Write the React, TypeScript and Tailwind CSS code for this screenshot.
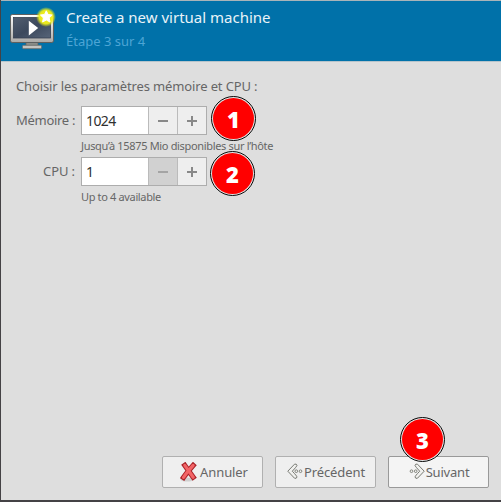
import type { ReactNode } from "react";

const star = "M46.3 10.8l1.8 3.7 4.1.5-3 2.9.8 4.1-3.7-2-3.7 2 .8-4.1-3-2.9 4.1-.5z";

function MachineIcon() {
  return (
    <svg width="50" height="46" viewBox="6 6 50 46" className="block shrink-0">
      <defs>
        <linearGradient id="frame" x1="0" y1="0" x2="0" y2="1">
          <stop offset="0" stopColor="#fff" />
          <stop offset="1" stopColor="#aaa9a6" />
        </linearGradient>
        <linearGradient id="screen" x1="0" y1="0" x2="1" y2="1">
          <stop offset="0" stopColor="#525e70" />
          <stop offset="0.5" stopColor="#3c495d" />
          <stop offset="1" stopColor="#566478" />
        </linearGradient>
        <radialGradient id="glow">
          <stop offset="0" stopColor="#fbf51c" />
          <stop offset="0.68" stopColor="#f0ee18" stopOpacity="0.95" />
          <stop offset="1" stopColor="#d8e820" stopOpacity="0" />
        </radialGradient>
      </defs>
      <path d="M26 41h12v5H26z" fill="#8b8d88" stroke="#5b5d5b" strokeWidth=".7" />
      <rect x="22.5" y="45.3" width="19" height="3.4" rx="1" fill="#c4c4c0" stroke="#686a66" strokeWidth=".8" />
      <rect x="10.5" y="14.5" width="43" height="28" rx="1.7" fill="url(#frame)" stroke="#5d5f5e" />
      <rect x="13.5" y="17.5" width="37" height="20.5" fill="url(#screen)" stroke="#354050" strokeWidth=".8" />
      <path d="M28.8 20.7v14.8l9.4-7.4z" fill="#fff" />
      <circle cx="46" cy="17" r="10" fill="url(#glow)" />
      <path d={star} fill="#fff" stroke="#fff" strokeWidth="1" strokeLinejoin="round" />
    </svg>
  );
}

function CancelIcon() {
  return (
    <svg width="18" height="20" viewBox="0 0 18 20" className="block">
      <ellipse cx="7" cy="17.5" rx="6.5" ry="2" fill="#bbb" opacity=".6" />
      <path d="M4.8 3.4 13.2 15.2M13.1 3.4C9.8 7 6.5 10.8 3.5 15.4" fill="none" stroke="#a92228" strokeWidth="5.2" strokeLinecap="square" strokeLinejoin="round" />
      <path d="M4.8 3.4 13.2 15.2M13.1 3.4C9.8 7 6.5 10.8 3.5 15.4" fill="none" stroke="#f26466" strokeWidth="3.2" strokeLinecap="round" />
    </svg>
  );
}

function ArrowIcon({ forward = false }: { forward?: boolean }) {
  return (
    <svg width="16" height="17" viewBox="0 0 16 17" className={forward ? "block -scale-x-100" : "block"}>
      <path d="M.8 8.2 7.5 1.2Q9.5.5 10 2.3Q9.9 3.3 5.3 8.2Q9.9 13 10 14Q9.5 16 7.5 15.2Z" fill="#f1f1ef" stroke="#777972" strokeWidth="1" />
      <circle cx="9.3" cy="8.2" r="1.35" fill="#f1f1ef" stroke="#777972" strokeWidth=".9" />
      <circle cx="13.5" cy="8.2" r="1.35" fill="#f1f1ef" stroke="#777972" strokeWidth=".9" />
    </svg>
  );
}

function Badge({ n, place }: { n: number; place: string }) {
  return (
    <span className={`absolute z-10 flex size-[45px] items-center justify-center rounded-full border border-[#080808] bg-[#e4e4e4] p-px ${place}`}>
      <span className="flex size-full items-center justify-center rounded-full bg-[#ff0000] font-['Open_Sans','Noto_Sans',sans-serif] text-[22px] leading-none font-extrabold tracking-normal text-white">{n}</span>
    </span>
  );
}

function SpinBox({ value, disabled = false, badge }: { value: string; disabled?: boolean; badge: ReactNode }) {
  return (
    <div className="relative flex h-[29px] w-[126px] border border-[#adadad] bg-white">
      <span className="flex w-[66px] items-center pl-[4px] text-[14px] tracking-[-0.6px] text-[#303030]">{value}</span>
      <button className={`flex w-[29px] items-center justify-center border-l border-[#bbb] ${disabled ? "bg-[#d1d1d1] text-[#a4a4a4]" : "bg-[#eee] text-[#888]"}`}>
        <svg width="10" height="10" viewBox="0 0 10 10"><path d="M0 4h10v2H0z" fill="currentColor" /></svg>
      </button>
      <button className="flex flex-1 items-center justify-center border-l border-[#bbb] bg-[#eee] text-[#888]">
        <svg width="10" height="10" viewBox="0 0 10 10"><path d="M0 4h4V0h2v4h4v2H6v4H4V6H0z" fill="currentColor" /></svg>
      </button>
      {badge}
    </div>
  );
}

export default function App() {
  return (
    <main className="flex h-[502px] w-[501px] flex-col overflow-hidden border-b-2 border-l border-[#444245] bg-[#dedede] font-['Noto_Sans',sans-serif] text-[#666]">
      <header className="flex h-[62px] shrink-0 border-t border-b border-t-[#a9b4b9] border-b-[#b6c4cb] bg-[#0071a9] pt-[5px] pl-[5px]">
        <MachineIcon />
        <div className="ml-[10px] flex flex-col whitespace-nowrap">
          <h1 className="h-[24px] text-[15px] leading-[23px] text-[#e9f3f8]">Create a new virtual machine</h1>
          <p className="text-[13px] leading-[23px] text-[#4da5d5]">Étape 3 sur 4</p>
        </div>
      </header>
      <section className="flex flex-1 flex-col pt-[14px] pl-[15px]">
        <p className="h-[30px] text-[13px] leading-[20px] tracking-[-0.13px]">Choisir les paramètres mémoire et CPU :</p>
        <div className="grid w-[260px] grid-cols-[59px_1fr] gap-x-[6px]">
          <label className="text-right text-[13px] leading-[29px] tracking-[-0.3px] whitespace-nowrap">Mémoire :</label>
          <SpinBox value="1024" badge={<Badge n={1} place="-top-[11px] left-[129px]" />} />
          <p className="col-start-2 h-[22px] text-[11px] leading-[22px] tracking-[-0.33px] whitespace-nowrap">Jusqu’à 15875 Mio disponibles sur l’hôte</p>
          <label className="text-right text-[13px] leading-[29px] tracking-[-0.1px]">CPU :</label>
          <SpinBox value="1" disabled badge={<Badge n={2} place="-top-[7px] left-[128px]" />} />
          <p className="col-start-2 h-[22px] text-[11px] leading-[22px] tracking-[-0.35px]">Up to 4 available</p>
        </div>
        <footer className="mt-auto mr-[12px] mb-[12px] flex justify-end gap-[12px] text-[13px]">
          <button className="flex h-[32px] w-[101px] items-center justify-center rounded-[2px] border border-[#b0b0b0] bg-[#efefef] pl-[3px]"><CancelIcon /><span className="mt-[2px] ml-[2px] tracking-[-0.1px]">Annuler</span></button>
          <button className="flex h-[32px] w-[101px] items-center justify-center rounded-[2px] border border-[#b0b0b0] bg-[#efefef] pl-px"><span className="-mt-[2px]"><ArrowIcon /></span><span className="mt-px ml-px tracking-[-0.1px]">Précédent</span></button>
          <button className="relative flex h-[32px] w-[101px] items-center justify-center rounded-[2px] border border-[#999] bg-[#f4f4f4] pl-px"><span className="-mt-[2px]"><ArrowIcon forward /></span><span className="mt-px ml-px tracking-[-0.2px]">Suivant</span><Badge n={3} place="-top-[40px] left-[11px]" /></button>
        </footer>
      </section>
    </main>
  );
}
